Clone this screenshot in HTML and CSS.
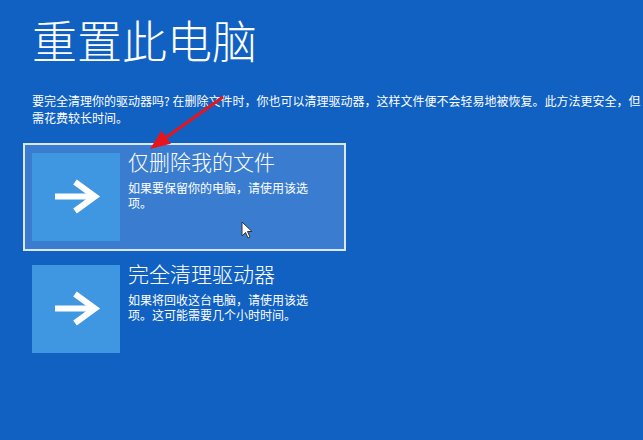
FILE: index.html
```html
<!DOCTYPE html>
<html lang="zh-CN">
  <head>
    <meta charset="UTF-8" />
    <meta name="viewport" content="width=device-width, initial-scale=1.0" />
    <title>重置此电脑</title>
    <link rel="stylesheet" href="styles.css">
  </head>
  <body>
    <main class="page">
      <h1 class="title">重置此电脑</h1>

      <p class="intro">
        要完全清理你的驱动器吗? 在删除文件时，你也可以清理驱动器，这样文件便不会轻易地被恢复。此方法更安全，但<br />需花费较长时间。
      </p>

      <div class="options">
        <div class="option option-hover">
          <div class="tile">
            <svg viewBox="0 0 88 88" width="88" height="88">
              <path d="M23 43.5 H60" />
              <path d="M43 29 L63 43.5 L43 58" />
            </svg>
          </div>
          <div class="option-text">
            <h2 class="option-title">仅删除我的文件</h2>
            <p class="option-desc">如果要保留你的电脑，请使用该选项。</p>
          </div>
        </div>

        <div class="option">
          <div class="tile">
            <svg viewBox="0 0 88 88" width="88" height="88">
              <path d="M23 43.5 H60" />
              <path d="M43 29 L63 43.5 L43 58" />
            </svg>
          </div>
          <div class="option-text">
            <h2 class="option-title">完全清理驱动器</h2>
            <p class="option-desc">如果将回收这台电脑，请使用该选项。这可能需要几个小时时间。</p>
          </div>
        </div>
      </div>

      <!-- red annotation arrow drawn over the screenshot -->
      <svg class="annotation" viewBox="0 0 643 440" width="643" height="440">
        <line x1="223" y1="97" x2="164" y2="139" />
        <polygon points="150,149 161.5,130.8 170.9,143.8" />
      </svg>

      <svg class="cursor" viewBox="0 0 12 18" width="12" height="18">
        <path d="M1 1 L1 15 L4.5 11.5 L7 17 L9 16 L6.5 10.5 L11 10.5 Z" />
      </svg>
    </main>
  </body>
</html>
```

FILE: styles.css
```css
/* Reset */
* {
  margin: 0;
  padding: 0;
  box-sizing: border-box;
}

body {
  font-family: "Noto Sans CJK SC", "Noto Sans", sans-serif;
  background-color: #1061c1;
  color: #fff;
  width: 643px;
  height: 440px;
  overflow: hidden;
}

.page {
  position: relative;
  height: 100%;
  padding: 14px 0 0 32px;
}

.title {
  font-size: 45px;
  font-weight: 300;
  line-height: 52px;
}

.intro {
  margin-top: 26px;
  font-size: 12px;
  line-height: 17px;
  white-space: nowrap;
}

/* Options */
.options {
  margin: 17px 0 0 -9px;
  display: flex;
  flex-direction: column;
  gap: 4px;
}

.option {
  width: 323px;
  display: flex;
  gap: 8px;
  padding: 8px 7px;
  border: 2px solid transparent;
}

.option-hover {
  background-color: #3a7dd0;
  border-color: #dce7f6;
}

.tile {
  flex: none;
  width: 88px;
  height: 88px;
  background-color: #3f97e2;
}

.tile svg {
  display: block;
}

.tile path {
  fill: none;
  stroke: #fff;
  stroke-width: 6;
  stroke-linejoin: miter;
}

.option-text {
  width: 190px;
  margin-top: -2px;
}

.option-title {
  font-size: 21px;
  font-weight: 300;
  line-height: 21px;
}

.option-desc {
  margin-top: 8px;
  font-size: 12px;
  line-height: 15px;
}

/* Overlays */
.annotation {
  position: absolute;
  left: 0;
  top: 0;
  pointer-events: none;
}

.annotation line {
  stroke: #e8141c;
  stroke-width: 3;
}

.annotation polygon {
  fill: #e8141c;
}

.cursor {
  position: absolute;
  left: 241px;
  top: 221px;
}

.cursor path {
  fill: #fff;
  stroke: #333;
  stroke-width: 1;
}
```
